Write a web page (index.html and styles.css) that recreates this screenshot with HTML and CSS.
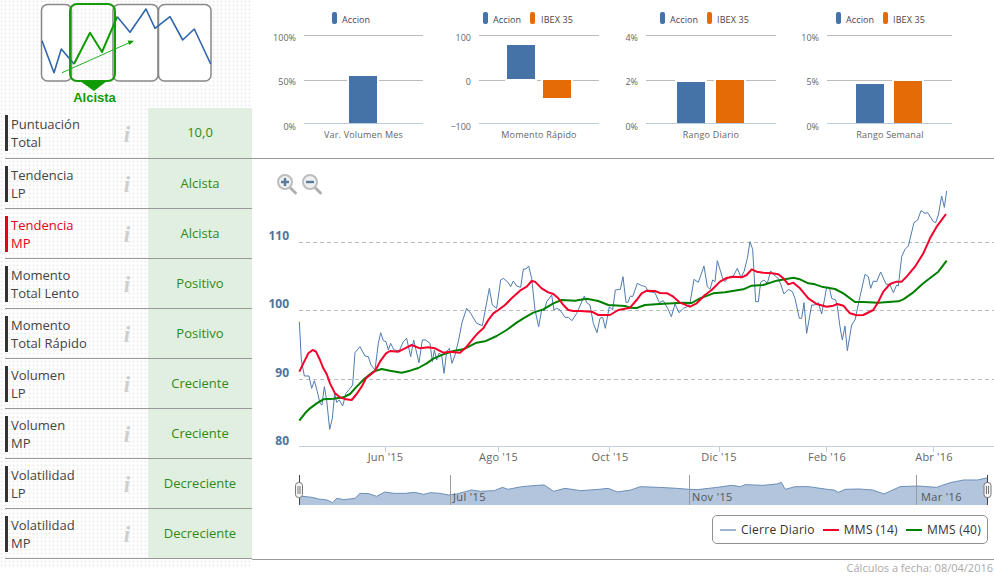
FILE: index.html
```html
<!DOCTYPE html>
<html lang="es">
<head>
<meta charset="utf-8">
<title>Análisis técnico</title>
<link rel="stylesheet" href="styles.css">
</head>
<body>
<div class="page">
  <aside class="sidebar">
    <svg class="trend" width="252" height="108" viewBox="0 0 252 108">
      <rect class="tbox" x="41.5" y="4.5" width="30" height="76.5" rx="6"/>
      <rect class="tbox" x="113" y="4.5" width="45" height="76.5" rx="6"/>
      <rect class="tbox" x="158.5" y="4.5" width="52.5" height="76.5" rx="6"/>
      <polyline class="tline" points="42,40.7 54,72.7 61.3,49 74,64"/>
      <polyline class="tline" points="117.3,16.7 130,32.3 146,9 155,28.3 170,16.7 182.7,40 194.3,29 210.7,64"/>
      <rect class="tsel" x="70" y="4" width="45" height="77" rx="7"/>
      <polyline class="tlineg" points="74,64 90,32.7 102,52 117.3,16.7"/>
      <line class="tarrow" x1="62" y1="72.7" x2="132" y2="41.5"/>
      <polygon class="tgreen" points="134,40.7 127.5,40.5 129.5,45"/>
      <polygon class="tgreen" points="80,81 107,81 94,91"/>
      <text class="ttext" x="94.5" y="101.5" text-anchor="middle">Alcista</text>
    </svg>
    <div class="row first"><div class="label">Puntuación<br>Total</div><span class="info">i</span><div class="value">10,0</div></div>
    <div class="row"><div class="label">Tendencia<br>LP</div><span class="info">i</span><div class="value">Alcista</div></div>
    <div class="row"><div class="label alert">Tendencia<br>MP</div><span class="info">i</span><div class="value">Alcista</div></div>
    <div class="row"><div class="label">Momento<br>Total Lento</div><span class="info">i</span><div class="value">Positivo</div></div>
    <div class="row"><div class="label">Momento<br>Total Rápido</div><span class="info">i</span><div class="value">Positivo</div></div>
    <div class="row"><div class="label">Volumen<br>LP</div><span class="info">i</span><div class="value">Creciente</div></div>
    <div class="row"><div class="label">Volumen<br>MP</div><span class="info">i</span><div class="value">Creciente</div></div>
    <div class="row"><div class="label">Volatilidad<br>LP</div><span class="info">i</span><div class="value">Decreciente</div></div>
    <div class="row"><div class="label">Volatilidad<br>MP</div><span class="info">i</span><div class="value">Decreciente</div></div>
  </aside>

  <main class="main">
    <section class="minis">
      <svg width="184" height="158" viewBox="252 0 184 158">
        <rect class="sw blue" x="332" y="12" width="5" height="12" rx="2"/>
        <text class="leg" x="342" y="23">Accion</text>
        <line class="grid" x1="304" x2="423" y1="35.5" y2="35.5"/>
        <line class="grid" x1="304" x2="423" y1="80.5" y2="80.5"/>
        <rect class="bar blue" x="348" y="75" width="30" height="49"/>
        <line class="base" x1="304" x2="423" y1="123.5" y2="123.5"/>
        <text class="ylab" x="296" y="41">100%</text>
        <text class="ylab" x="296" y="85">50%</text>
        <text class="ylab" x="296" y="130">0%</text>
        <text class="xlab" x="363.5" y="138">Var. Volumen Mes</text>
      </svg>
      <svg width="182" height="158" viewBox="436 0 182 158">
        <rect class="sw blue" x="483" y="12" width="5" height="12" rx="2"/>
        <text class="leg" x="493" y="23">Accion</text>
        <rect class="sw orange" x="530" y="12" width="5" height="12" rx="2"/>
        <text class="leg" x="541" y="23">IBEX 35</text>
        <line class="grid" x1="479" x2="599" y1="35.5" y2="35.5"/>
        <line class="grid" x1="479" x2="599" y1="80.5" y2="80.5"/>
        <rect class="bar blue" x="506" y="44" width="30" height="36"/>
        <rect class="bar orange" x="542" y="79" width="30" height="20"/>
        <line class="base" x1="479" x2="599" y1="123.5" y2="123.5"/>
        <text class="ylab" x="471" y="41">100</text>
        <text class="ylab" x="471" y="85">0</text>
        <text class="ylab" x="471" y="130">−100</text>
        <text class="xlab" x="539" y="138">Momento Rápido</text>
      </svg>
      <svg width="172" height="158" viewBox="618 0 172 158">
        <rect class="sw blue" x="660" y="12" width="5" height="12" rx="2"/>
        <text class="leg" x="670" y="23">Accion</text>
        <rect class="sw orange" x="707" y="12" width="5" height="12" rx="2"/>
        <text class="leg" x="717" y="23">IBEX 35</text>
        <line class="grid" x1="646" x2="776" y1="35.5" y2="35.5"/>
        <line class="grid" x1="646" x2="776" y1="80.5" y2="80.5"/>
        <rect class="bar blue" x="676" y="81" width="30" height="43"/>
        <rect class="bar orange" x="715" y="79" width="30" height="45"/>
        <line class="base" x1="646" x2="776" y1="123.5" y2="123.5"/>
        <text class="ylab" x="638" y="41">4%</text>
        <text class="ylab" x="638" y="85">2%</text>
        <text class="ylab" x="638" y="130">0%</text>
        <text class="xlab" x="711" y="138">Rango Diario</text>
      </svg>
      <svg width="204" height="158" viewBox="790 0 204 158">
        <rect class="sw blue" x="836" y="12" width="5" height="12" rx="2"/>
        <text class="leg" x="846" y="23">Accion</text>
        <rect class="sw orange" x="883" y="12" width="5" height="12" rx="2"/>
        <text class="leg" x="893" y="23">IBEX 35</text>
        <line class="grid" x1="827" x2="952" y1="35.5" y2="35.5"/>
        <line class="grid" x1="827" x2="952" y1="80.5" y2="80.5"/>
        <rect class="bar blue" x="855" y="83" width="30" height="41"/>
        <rect class="bar orange" x="893" y="80" width="30" height="44"/>
        <line class="base" x1="827" x2="952" y1="123.5" y2="123.5"/>
        <text class="ylab" x="819" y="41">10%</text>
        <text class="ylab" x="819" y="85">5%</text>
        <text class="ylab" x="819" y="130">0%</text>
        <text class="xlab" x="890" y="138">Rango Semanal</text>
      </svg>
    </section>

    <section class="chart">
      <svg class="stock" width="742" height="351" viewBox="252 159 742 351">
        <!-- zoom buttons -->
        <line class="zhandle" x1="289.5" y1="187" x2="295.5" y2="193"/>
        <circle class="zring" cx="285" cy="182" r="7"/>
        <path class="zsign" d="M281 182h8M285 178v8"/>
        <line class="zhandle" x1="314.5" y1="187" x2="320.5" y2="193"/>
        <circle class="zring" cx="310" cy="182" r="7"/>
        <path class="zsign" d="M306 182h8"/>

        <line class="dash" x1="299" x2="994" y1="242.5" y2="242.5"/>
        <line class="dash" x1="299" x2="994" y1="310.5" y2="310.5"/>
        <line class="dash" x1="299" x2="994" y1="379.5" y2="379.5"/>

        <line class="axis" x1="299" x2="994" y1="446.5" y2="446.5"/>
        <line class="axis" x1="385.5" x2="385.5" y1="447" y2="452"/>
        <line class="axis" x1="498.5" x2="498.5" y1="447" y2="452"/>
        <line class="axis" x1="609.5" x2="609.5" y1="447" y2="452"/>
        <line class="axis" x1="719.5" x2="719.5" y1="447" y2="452"/>
        <line class="axis" x1="826.5" x2="826.5" y1="447" y2="452"/>
        <line class="axis" x1="933.5" x2="933.5" y1="447" y2="452"/>

        <text class="yval" x="289" y="240">110</text>
        <text class="yval" x="289" y="308">100</text>
        <text class="yval" x="289" y="377">90</text>
        <text class="yval" x="289" y="445">80</text>

        <text class="xval" x="385.5" y="461">Jun '15</text>
        <text class="xval" x="498.5" y="461">Ago '15</text>
        <text class="xval" x="610" y="461">Oct '15</text>
        <text class="xval" x="719" y="461">Dic '15</text>
        <text class="xval" x="827" y="461">Feb '16</text>
        <text class="xval" x="934" y="461">Abr '16</text>

        <g transform="translate(260 170) scale(0.33333)">
          <polyline class="l-blue" points="118,455 124,570 133,618 147,618 155,655 163,632 172,665 180,700 186,705 193,650 200,690 209,778 217,745 224,670 230,697 238,690 248,708 258,670 268,658 278,645 285,548 300,530 315,558 325,560 333,585 345,600 355,520 362,488 370,512 378,515 385,540 392,520 402,540 418,542 430,515 440,505 452,560 461,510 477,578 487,510 497,510 510,520 517,575 523,540 530,570 537,550 545,555 552,610 560,545 568,535 576,580 585,555 596,510 606,458 620,415 632,430 650,460 667,467 688,355 697,405 710,415 722,330 730,325 745,338 752,350 760,333 770,348 782,352 790,297 798,297 806,288 815,325 825,420 836,470 845,420 853,422 860,395 875,375 882,420 890,415 900,420 915,442 925,442 936,452 950,430 973,378 980,398 990,405 1000,460 1011,488 1020,445 1028,442 1036,475 1048,410 1058,420 1066,360 1081,358 1089,320 1098,397 1104,397 1110,380"/>
          <polyline class="l-green" points="118,752 135,730 150,715 170,700 190,688 220,686 250,682 270,672 290,650 315,625 340,605 365,597 390,602 425,608 450,602 475,594 500,580 520,566 550,553 580,543 610,538 650,518 675,514 710,498 740,480 770,458 790,445 820,428 850,418 880,400 905,390 945,392 980,386 1015,393 1045,405 1095,408 1110,413"/>
          <polyline class="l-red" points="118,605 130,580 145,550 158,540 168,545 180,570 190,595 200,612 210,640 225,670 240,682 258,688 275,690 290,672 305,650 318,625 330,615 345,603 360,575 378,550 390,543 415,545 435,535 455,525 480,535 505,532 525,535 550,548 570,545 600,548 620,530 640,505 655,488 670,475 685,450 700,430 715,420 735,405 755,385 780,362 800,350 815,333 825,335 845,355 865,367 880,372 895,385 910,405 925,420 940,423 960,423 995,425 1015,435 1050,435 1075,420 1110,413"/>
        </g>
        <g transform="translate(630 170) scale(0.33333)">
          <polyline class="l-blue" points="0,378 8,380 22,340 35,347 47,350 55,365 75,368 88,398 100,392 113,415 124,440 135,402 147,428 160,415 172,410 180,400 192,328 205,337 222,288 232,350 240,358 248,330 255,335 262,272 278,325 285,335 298,320 310,318 322,295 333,322 342,305 352,265 360,215 368,238 377,395 385,395 392,337 402,330 412,340 422,303 432,315 445,325 453,345 462,372 475,358 487,365 495,385 508,445 515,445 522,398 530,490 545,405 555,405 565,398 575,432 585,380 590,352 598,352 605,385 617,390 622,410 630,470 637,510 645,468 652,542 665,465 675,450 690,380 705,313 715,320 722,355 730,333 740,335 752,306 768,342 780,345 790,368 800,345 805,348 815,260 825,238 835,228 852,158 863,150 873,122 885,130 893,128 910,155 917,158 925,135 935,78 943,112 950,63"/>
          <polyline class="l-green" points="0,413 20,414 45,405 100,401 160,398 185,399 210,385 250,370 285,367 340,358 365,347 400,345 440,332 490,323 510,328 535,340 555,343 575,350 615,357 640,370 675,396 700,396 745,398 805,394 820,388 850,367 880,340 925,305 950,272"/>
          <polyline class="l-red" points="0,413 20,390 35,370 50,362 75,363 90,369 112,370 130,380 150,398 180,410 200,400 225,375 245,360 270,335 290,324 310,320 335,322 350,315 365,298 380,305 400,308 425,310 445,313 460,325 475,343 490,338 510,355 535,385 560,402 590,410 610,407 622,402 640,407 660,430 680,436 700,435 730,420 745,395 760,365 780,342 800,335 815,335 830,320 855,290 880,250 900,205 920,170 948,132"/>
        </g>

        <!-- navigator -->
        <g transform="translate(280 450) scale(0.45588 0.33333)">
          <polygon class="nav-area" points="43,165 43,138 70,142 85,147 103,150 115,158 125,145 140,149 165,145 175,130 195,131 212,139 230,126 250,130 275,130 295,127 315,133 330,128 350,130 370,135 385,133 420,120 440,124 470,122 488,112 500,118 530,110 565,106 580,105 600,124 625,115 660,122 700,118 720,115 740,126 770,120 790,110 830,112 870,115 897,118 915,119 960,112 990,106 1010,110 1020,104 1060,106 1090,102 1100,97 1108,118 1130,110 1160,110 1200,118 1215,120 1225,127 1240,118 1270,117 1300,120 1325,132 1360,110 1400,108 1440,112 1470,98 1500,90 1530,90 1550,84 1553,88 1553,165"/>
          <polyline class="nav-line" points="43,138 70,142 85,147 103,150 115,158 125,145 140,149 165,145 175,130 195,131 212,139 230,126 250,130 275,130 295,127 315,133 330,128 350,130 370,135 385,133 420,120 440,124 470,122 488,112 500,118 530,110 565,106 580,105 600,124 625,115 660,122 700,118 720,115 740,126 770,120 790,110 830,112 870,115 897,118 915,119 960,112 990,106 1010,110 1020,104 1060,106 1090,102 1100,97 1108,118 1130,110 1160,110 1200,118 1215,120 1225,127 1240,118 1270,117 1300,120 1325,132 1360,110 1400,108 1440,112 1470,98 1500,90 1530,90 1550,84 1553,88"/>
        </g>
        <line class="nav-tick" x1="450.5" x2="450.5" y1="475" y2="505"/>
        <line class="nav-tick" x1="689.5" x2="689.5" y1="475" y2="505"/>
        <line class="nav-tick" x1="916.5" x2="916.5" y1="475" y2="505"/>
        <text class="nav-lab" x="453" y="501">Jul '15</text>
        <text class="nav-lab" x="692" y="501">Nov '15</text>
        <text class="nav-lab" x="921" y="501">Mar '16</text>
        <line class="nav-edge" x1="299.5" x2="299.5" y1="475" y2="505"/>
        <line class="nav-edge" x1="987.5" x2="987.5" y1="475" y2="505"/>
        <rect class="handle" x="295.5" y="482.5" width="7" height="15" rx="3"/>
        <path class="grip" d="M298 486v8M300 486v8"/>
        <rect class="handle" x="984" y="482.5" width="7" height="15" rx="3"/>
        <path class="grip" d="M986.5 486v8M988.5 486v8"/>
      </svg>
      <div class="legend">
        <span class="key key-blue"></span><span class="key-text">Cierre Diario</span>
        <span class="key key-red"></span><span class="key-text">MMS (14)</span>
        <span class="key key-green"></span><span class="key-text">MMS (40)</span>
      </div>
    </section>
    <footer class="foot">Cálculos a fecha: 08/04/2016</footer>
  </main>
</div>
</body>
</html>
```
FILE: styles.css
```css
html, body {
  margin: 0;
  padding: 0;
  background: #fff;
}
body {
  width: 994px;
  height: 580px;
  overflow: hidden;
  font-family: "Open Sans", sans-serif;
}
.page {
  display: flex;
  align-items: flex-start;
}
svg { display: block; }

/* left column */
.sidebar {
  width: 252px;
  height: 568px;
  flex: none;
  background-image: radial-gradient(circle at 1.5px 1.5px, #f2f2f2 1px, transparent 1.3px);
  background-size: 4px 4px;
}
.tbox { fill: #fff; stroke: #888; stroke-width: 1.5; }
.tline { fill: none; stroke: #2f66ab; stroke-width: 1.6; stroke-linejoin: round; }
.tlineg { fill: none; stroke: #0f9c03; stroke-width: 2; stroke-linejoin: round; }
.tsel { fill: none; stroke: #169b0a; stroke-width: 2; }
.tarrow { stroke: #1fb01f; stroke-width: 1; }
.tgreen { fill: #109a03; }
.ttext { font: bold 13px "Liberation Sans", sans-serif; fill: #109a03; }

.row {
  display: flex;
  height: 50px;
  margin-left: 5px;
  width: 247px;
  box-sizing: border-box;
  border-bottom: 1px solid #999;
}
.row.first { height: 51px; }
.label {
  flex: none;
  box-sizing: border-box;
  width: 108px;
  height: 36px;
  margin-top: 7px;
  padding-left: 3px;
  border-left: 3px solid #333;
  font-size: 13px;
  line-height: 18px;
  color: #444;
}
.label.alert {
  color: #e2001a;
  border-left-color: #e2001a;
}
.info {
  flex: none;
  width: 28px;
  margin-right: 7px;
  text-align: center;
  align-self: center;
  padding-top: 3px;
  font: italic bold 23px/20px "Liberation Serif", serif;
  color: #cfcfcf;
}
.value {
  flex: 1;
  display: flex;
  align-items: center;
  justify-content: center;
  padding-bottom: 2px;
  background: #e1efe0;
  font-size: 13px;
  color: #2f8a18;
}

/* right column */
.main {
  width: 742px;
  flex: none;
}
.minis {
  display: flex;
  height: 158px;
  border-bottom: 1px solid #999;
}
.sw.blue, .bar.blue { fill: #4572a7; }
.sw.orange, .bar.orange { fill: #e56b06; }
.bar { stroke: #fff; stroke-width: 2; }
.leg { font-size: 9px; letter-spacing: 0.12px; fill: #445; }
.ylab { font-size: 9px; fill: #666; text-anchor: end; }
.xlab { font-size: 9px; letter-spacing: 0.2px; fill: #666; text-anchor: middle; }
.grid { stroke: #bcbcbc; stroke-width: 1; }
.base { stroke: #bccadc; stroke-width: 1; }

.chart {
  height: 401px;
  box-sizing: border-box;
  border-bottom: 1px solid #999;
}
.zhandle { stroke: #b0b0b0; stroke-width: 3; stroke-linecap: round; }
.zring { fill: #eef0f2; stroke: #bdbdbd; stroke-width: 2; }
.zsign { fill: none; stroke: #5b7c98; stroke-width: 2.4; }
.dash { stroke: #bbb; stroke-width: 1; stroke-dasharray: 4 3; }
.axis { stroke: #c0d0e0; stroke-width: 1; }
.yval { font-size: 12px; font-weight: 700; fill: #4d759e; text-anchor: end; }
.xval { font-size: 11px; letter-spacing: 0.2px; fill: #666; text-anchor: middle; }
.l-blue, .l-red, .l-green, .nav-line {
  fill: none;
  stroke-linejoin: round;
  vector-effect: non-scaling-stroke;
}
.l-blue { stroke: #4f7cb0; stroke-width: 1; }
.l-red { stroke: #f4002a; stroke-width: 2; }
.l-green { stroke: #008000; stroke-width: 2; }
.nav-area { fill: #b2c5dc; }
.nav-line { stroke: #6c8fb9; stroke-width: 1; }
.nav-tick { stroke: #9a9a9a; stroke-width: 1; }
.nav-edge { stroke: #444; stroke-width: 1; }
.nav-lab { font-size: 11px; letter-spacing: 0.35px; fill: #555; }
.handle { fill: #f4f4f4; stroke: #777; stroke-width: 1; }
.grip { fill: none; stroke: #777; stroke-width: 1; }

.legend {
  display: flex;
  align-items: center;
  box-sizing: border-box;
  width: 276px;
  height: 29px;
  margin: 5px 6px 0 auto;
  padding-left: 7px;
  border: 1px solid #909090;
  border-radius: 5px;
  background: #fff;
  font-size: 12px;
  letter-spacing: 0.25px;
  color: #333;
}
.key {
  flex: none;
  width: 16px;
  height: 2px;
  margin-right: 5px;
}
.key-text { margin-right: 8px; white-space: nowrap; }
.key-blue { background: #9db4d2; }
.key-red { background: #f4002a; }
.key-green { background: #008000; }

.foot {
  padding-right: 1px;
  text-align: right;
  font-size: 11px;
  line-height: 16px;
  color: #aaa;
}
```
